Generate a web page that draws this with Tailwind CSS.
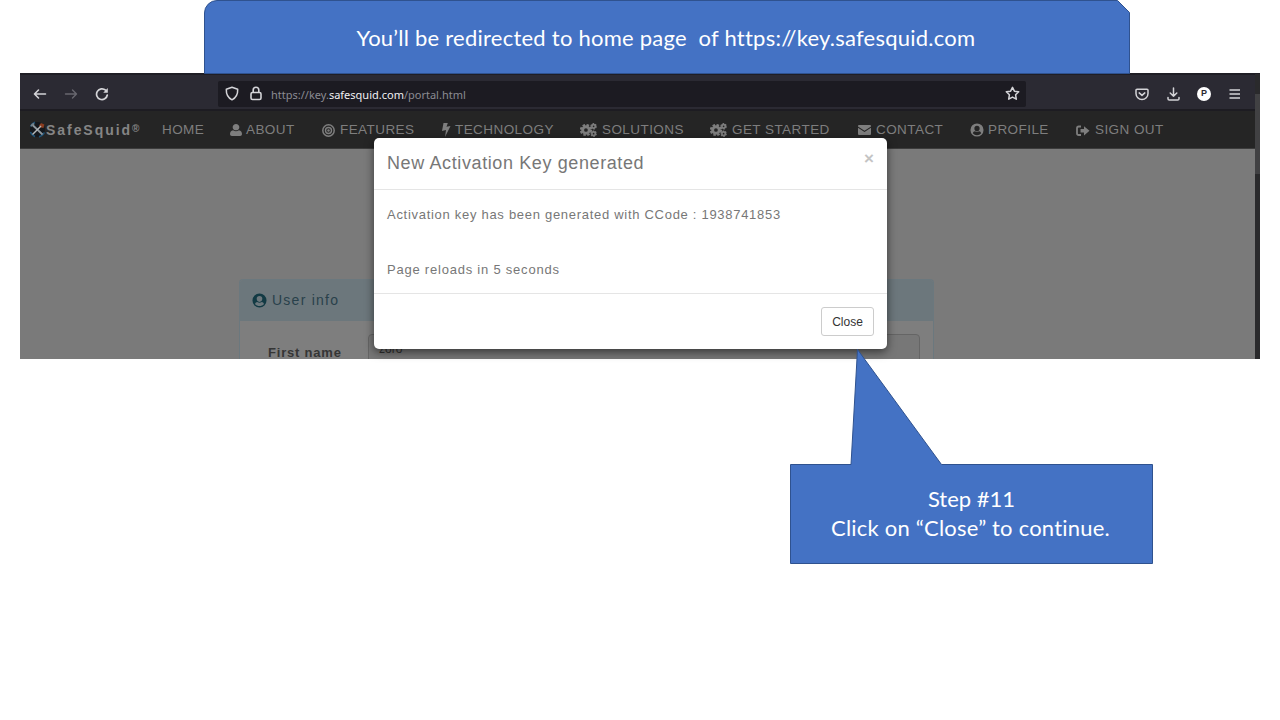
<!DOCTYPE html>
<html lang="en">
<head>
<meta charset="utf-8">
<title>Activation key generated</title>
<script src="https://cdn.jsdelivr.net/npm/@tailwindcss/browser@4"></script>
</head>
<body class="bg-white">
<svg class="hidden">
  <symbol id="cogs" viewBox="0 0 20 16">
    <g fill="none" stroke="currentColor">
      <circle cx="7" cy="8" r="3.900" stroke-width="3.400"/>
      <circle cx="7" cy="8" r="6" stroke-width="2.400" stroke-dasharray="2.900 1.812"/>
      <circle cx="16" cy="3.700" r="2" stroke-width="2"/>
      <circle cx="16" cy="3.700" r="3.100" stroke-width="1.400" stroke-dasharray="1.900 1.346"/>
      <circle cx="16" cy="12.300" r="2" stroke-width="2"/>
      <circle cx="16" cy="12.300" r="3.100" stroke-width="1.400" stroke-dasharray="1.900 1.346"/>
    </g>
  </symbol>
  <symbol id="usercircle" viewBox="0 0 16 16">
    <path fill="currentColor" fill-rule="evenodd" d="M8 .5a7.500 7.500 0 1 0 0 15a7.500 7.500 0 1 0 0-15zM8 3.200a3 3 0 0 1 3 3c0 1.900-1.300 3.300-3 3.300s-3-1.400-3-3.300a3 3 0 0 1 3-3zM3.200 11.800c.4-1.500 1.300-2.200 2.400-2.300c1.400 1.100 3.400 1.100 4.800 0c1.100.1 2 .8 2.400 2.300c-2.400 2.900-7.200 2.900-9.600 0z"/>
  </symbol>
</svg>
<main class="relative flex h-[720px] w-[1280px] flex-col overflow-hidden bg-white">
  <header class="relative z-10 ml-[204px] flex h-[74px] w-[926px] shrink-0 items-center justify-center pt-px">
    <svg class="absolute inset-0" width="926" height="74" viewBox="0 0 926 74"><path d="M.5 73.500V13A12.500 12.500 0 0 1 13 .5H913.500L925.500 12.500V73.500Z" fill="#4472c4" stroke="#2f528f"/></svg>
    <h1 class="relative right-px whitespace-pre font-[Lato,sans-serif] text-[22px] leading-[29px] tracking-[0.240px] text-white">You’ll be redirected to home page  of https://key.safesquid.com</h1>
  </header>

  <section class="relative -mt-[1px] ml-[20px] flex h-[286px] w-[1240px] shrink-0 flex-col overflow-hidden bg-[#7a7a7a] font-['Liberation_Sans',sans-serif]">
    <div class="flex h-[38px] shrink-0 items-center border-t-2 border-b-2 border-t-[#1f1e25] border-b-[#1d1c22] bg-[#2b2a33] text-[#d4d4d8]">
      <div class="mt-[4px] flex items-center">
        <svg class="ml-[13px]" width="14" height="14" viewBox="0 0 14 14" fill="none" stroke="currentColor" stroke-width="1.600" stroke-linecap="round" stroke-linejoin="round"><path d="M12.500 7H1.500M5.500 3L1.500 7L5.500 11"/></svg>
        <svg class="ml-[17px] text-[#68676f]" width="14" height="14" viewBox="0 0 14 14" fill="none" stroke="currentColor" stroke-width="1.400" stroke-linecap="round" stroke-linejoin="round"><path d="M1.500 7H12.500M8.500 3L12.500 7L8.500 11"/></svg>
        <svg class="ml-[17px]" width="14" height="14" viewBox="0 0 14 14" fill="none" stroke="currentColor" stroke-width="1.700" stroke-linecap="round"><path d="M12.300 8A5.400 5.400 0 1 1 10.600 3.200"/><path d="M12.800 1V5.700H8.200Z" fill="currentColor" stroke="none"/></svg>
      </div>
      <div class="mt-[4px] ml-[109px] flex h-[26px] w-[808px] items-center rounded-[2px] bg-[#1c1b22]">
        <svg class="mb-px ml-[7px]" width="14" height="15" viewBox="0 0 14 15" fill="none" stroke="currentColor" stroke-width="1.500" stroke-linejoin="round"><path d="M7 1.200L12.700 3.200C12.900 8 11.500 11.500 7 13.800C2.500 11.500 1.100 8 1.300 3.200Z"/></svg>
        <svg class="mb-px ml-[11px]" width="12" height="15" viewBox="0 0 12 15" fill="none" stroke="currentColor" stroke-width="1.600"><rect x="1" y="6.500" width="10" height="7" rx="1.500"/><path d="M3.200 6.500V4a2.800 2.800 0 0 1 5.600 0V6.500"/></svg>
        <span class="mt-[2px] ml-[9px] whitespace-nowrap font-['Noto_Sans',sans-serif] text-[11px] text-[#8b8b92]">https://key.<span class="text-[#f0f0f2]">safesquid.com</span>/portal.html</span>
        <svg class="mr-[6px] mb-px ml-auto" width="15" height="15" viewBox="0 0 15 15" fill="none" stroke="currentColor" stroke-width="1.500" stroke-linejoin="round"><path d="M7.500 1.300L9.400 5.200L13.700 5.800L10.600 8.800L11.300 13.200L7.500 11.100L3.700 13.200L4.400 8.800L1.300 5.800L5.600 5.200Z"/></svg>
      </div>
      <div class="mt-[3px] ml-[109px] flex items-center">
        <svg class="mt-px" width="14" height="13" viewBox="0 0 14 13" fill="none" stroke="currentColor" stroke-width="1.500" stroke-linecap="round" stroke-linejoin="round"><path d="M2 1.200H12A1 1 0 0 1 13 2.200V5.500A6 6 0 0 1 1 5.500V2.200A1 1 0 0 1 2 1.200ZM4.200 4.900L7 7.400L9.800 4.900"/></svg>
        <svg class="ml-[18px]" width="13" height="14" viewBox="0 0 13 14" fill="none" stroke="currentColor" stroke-width="1.500" stroke-linecap="round" stroke-linejoin="round"><path d="M6.500 1V9.200M3.200 6L6.500 9.200L9.800 6M1 10.500V11.700A1.300 1.300 0 0 0 2.300 13H10.700A1.300 1.300 0 0 0 12 11.700V10.500"/></svg>
        <span class="ml-[17px] flex size-[14px] items-center justify-center rounded-full bg-white text-[9px] leading-none font-bold text-[#2b2a33]">P</span>
        <svg class="ml-[18px]" width="12" height="10" viewBox="0 0 12 10" stroke="currentColor" stroke-width="1.400"><path d="M.5 1H11M.5 5H11M.5 9H11"/></svg>
      </div>
    </div>

    <nav class="flex h-[38px] shrink-0 items-center border-b border-[#3c3c3c] bg-[#252525] pt-[2px] pl-[9px] text-[13.5px] tracking-[0.430px] whitespace-nowrap text-[#7e7e7e]">
      <div class="flex w-[133px] items-center">
        <svg class="mb-[2px]" width="17" height="17" viewBox="0 0 17 17"><circle cx="8.500" cy="8.500" r="7.500" fill="#14181d"/><path d="M1.500 5.500A8 8 0 0 1 6 1.400M1.400 11A8 8 0 0 0 6 15.600M10 15.800A8 8 0 0 0 15.300 11.500" fill="none" stroke="#1e5276" stroke-width="1.700"/><path d="M10 4.500L12 2L15.300 3.500L14.500 7L11.500 6.500Z" fill="#8a3d20"/><path d="M3 3.500L13.500 13.500" stroke="#8f989e" stroke-width="1.800"/><path d="M12 5L3.500 13.500" stroke="#b5b9bb" stroke-width="1.400"/><path d="M2 5L5 2.500" stroke="#75828a" stroke-width="2"/></svg>
        <span class="text-[14px] font-bold tracking-[1.950px] text-[#858585]">SafeSquid<sup class="top-[-3px] text-[10px]">®</sup></span>
      </div>
      <div class="flex w-[68px] items-center">HOME</div>
      <div class="flex w-[92px] items-center"><svg class="mr-[4px] mb-px" width="12" height="12" viewBox="0 0 448 512" fill="currentColor" preserveAspectRatio="none"><path d="M224 270c70 0 125-60 125-135S294 0 224 0 99 60 99 135s55 135 125 135zm110 0c-60 55-160 55-220 0C40 285 0 350 0 430c0 50 30 82 70 82h308c40 0 70-32 70-82 0-80-40-145-114-160z"/></svg><span>ABOUT</span></div>
      <div class="flex w-[119px] items-center"><svg class="mr-[5px] mb-px" width="13" height="13" viewBox="0 0 13 13" fill="none" stroke="currentColor"><circle cx="6.500" cy="6.500" r="5.700" stroke-width="1.500"/><circle cx="6.500" cy="6.500" r="3" stroke-width="1.400"/><circle cx="6.500" cy="6.500" r="1.200" fill="currentColor" stroke="none"/></svg><span>FEATURES</span></div>
      <div class="flex w-[139px] items-center"><svg class="mr-[4px] mb-px" width="10" height="14" viewBox="0 0 10 14" fill="currentColor"><path d="M2.500 0H6.800L5.500 3.800L9.500 3L4 14L5 7L1 8Z"/></svg><span>TECHNOLOGY</span></div>
      <div class="flex w-[130px] items-center"><svg class="mr-[5px] mb-px" width="17" height="14"><use href="#cogs"/></svg><span>SOLUTIONS</span></div>
      <div class="flex w-[148px] items-center"><svg class="mr-[5px] mb-px" width="17" height="14"><use href="#cogs"/></svg><span>GET STARTED</span></div>
      <div class="flex w-[112px] items-center"><svg class="mr-[5px] mb-px" width="13" height="10" viewBox="0 0 13 10" fill="currentColor"><path d="M1 0H12Q13 0 13 1V1.500L6.500 5.700L0 1.500V1Q0 0 1 0ZM0 2.800L6.500 7L13 2.800V9Q13 10 12 10H1Q0 10 0 9Z"/></svg><span>CONTACT</span></div>
      <div class="flex w-[106px] items-center"><svg class="mr-[4px] mb-px" width="14" height="14"><use href="#usercircle"/></svg><span>PROFILE</span></div>
      <div class="flex items-center"><svg class="mr-[5px]" width="14" height="12" viewBox="0 0 14 12" fill="none" stroke="currentColor"><path d="M5 1.500H2.800Q1 1.500 1 3.300V8.200Q1 10 2.800 10H5" stroke-width="1.800"/><path d="M4.500 4H8V1.200L13.500 5.800L8 10.400V7.600H4.500Z" fill="currentColor" stroke="none"/></svg><span>SIGN OUT</span></div>
    </nav>

    <div class="flex-1 pt-[130px] pl-[219px]">
      <div class="w-[695px] rounded-t-[4px] border border-b-0 border-[#6b787e] bg-[#7e7e7e]">
        <div class="flex h-[41px] items-center rounded-t-[3px] bg-[#6c777c] pl-[12px] text-[14px] tracking-[1.250px] text-[#29414b]"><svg class="mr-[5px] text-[#123a44]" width="15" height="15"><use href="#usercircle"/></svg><span>User info</span></div>
        <div class="flex h-[60px] items-start pt-[13px]">
          <span class="mt-[11px] ml-[28px] w-[100px] text-[13px] leading-[16px] font-bold tracking-[0.800px] text-[#353535]">First name</span>
          <div class="h-[60px] w-[552px] rounded-[4px] border border-[#656565] bg-[#777777] pt-[5px] pl-[10px] text-[12px] leading-[18px] text-[#303030]">zoro</div>
        </div>
      </div>
    </div>

    <div class="absolute top-[1px] right-0 h-[285px] w-[5px] bg-[#2a2a2c]"><div class="mt-[20px] h-[80px] w-[5px] bg-[#414143]"></div></div>
  </section>

  <div role="dialog" class="absolute top-[138px] left-[374px] z-20 flex h-[211px] w-[513px] flex-col rounded-[5px] bg-white font-['Liberation_Sans',sans-serif] text-[#777777] shadow-[0_3px_10px_rgba(0,0,0,0.55)]">
    <div class="flex h-[52px] justify-between border-b border-[#e5e5e5] pt-[14px] pr-[13px] pl-[13px]">
      <h2 class="text-[18px] leading-[22px] tracking-[0.610px] whitespace-nowrap">New Activation Key generated</h2>
      <span class="text-[17px] leading-[13px] font-bold text-[#c4c4c4]">×</span>
    </div>
    <div class="flex h-[104px] flex-col gap-[39px] border-b border-[#e5e5e5] pt-[17px] pl-[13px] text-[13px] leading-[16px] tracking-[0.710px] whitespace-nowrap">
      <p>Activation key has been generated with CCode : 1938741853</p>
      <p class="tracking-[0.780px]">Page reloads in 5 seconds</p>
    </div>
    <div class="flex justify-end pt-[13px] pr-[13px]"><button class="h-[29px] w-[53px] rounded-[3px] border border-[#cccccc] text-[12px] text-[#333333]">Close</button></div>
  </div>

  <aside class="relative z-30 mt-[105px] ml-[790px] flex h-[100px] w-[363px] flex-col items-center justify-center pb-[2px] font-[Lato,sans-serif] text-[22px] leading-[29px] text-white">
    <svg class="absolute bottom-0 left-0" width="363" height="215" viewBox="0 0 363 215"><path d="M.5 115.500H61L67.500 .5L151.500 115.500H362.500V214.500H.5Z" fill="#4472c4" stroke="#2f528f"/></svg>
    <p class="relative">Step #11</p>
    <p class="relative right-px tracking-[0.210px]">Click on “Close” to continue.</p>
  </aside>
</main>
</body>
</html>
